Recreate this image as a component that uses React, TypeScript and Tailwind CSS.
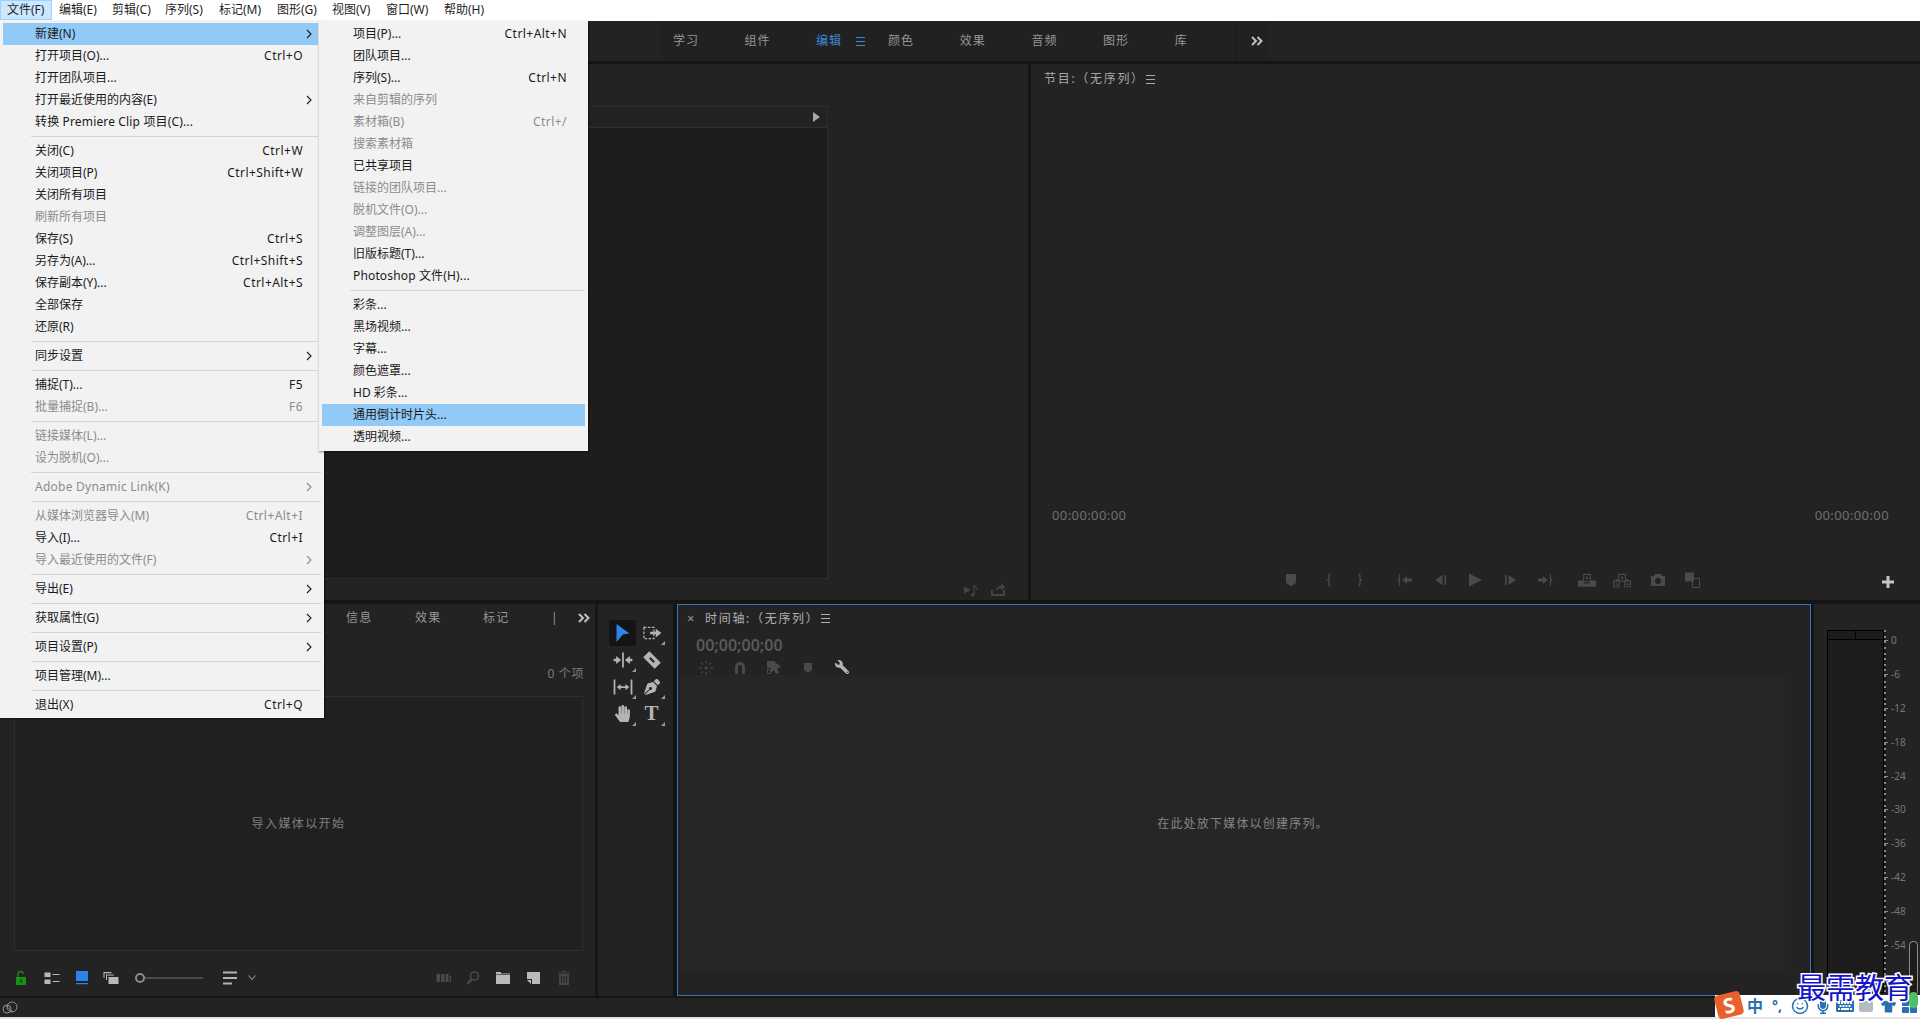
import React from "react";
import { FaWrench, FaHandPaper, FaPenNib, FaMicrophone, FaKeyboard, FaTshirt, FaThLarge } from "react-icons/fa";
import { LuSmile } from "react-icons/lu";

type Row = { t: string; s?: string; d?: boolean; a?: boolean; h?: boolean; l?: string } | "sep";

const fileMenu: Row[] = [
  { t: "新建(N)", a: true, h: true },
  { t: "打开项目(O)...", s: "Ctrl+O" },
  { t: "打开团队项目..." },
  { t: "打开最近使用的内容(E)", a: true },
  { t: "转换 Premiere Clip 项目(C)...", l: "tracking-[0.15px]" },
  "sep",
  { t: "关闭(C)", s: "Ctrl+W" },
  { t: "关闭项目(P)", s: "Ctrl+Shift+W" },
  { t: "关闭所有项目" },
  { t: "刷新所有项目", d: true },
  { t: "保存(S)", s: "Ctrl+S" },
  { t: "另存为(A)...", s: "Ctrl+Shift+S" },
  { t: "保存副本(Y)...", s: "Ctrl+Alt+S" },
  { t: "全部保存" },
  { t: "还原(R)" },
  "sep",
  { t: "同步设置", a: true },
  "sep",
  { t: "捕捉(T)...", s: "F5" },
  { t: "批量捕捉(B)...", s: "F6", d: true },
  "sep",
  { t: "链接媒体(L)...", d: true },
  { t: "设为脱机(O)...", d: true },
  "sep",
  { t: "Adobe Dynamic Link(K)", a: true, d: true, l: "tracking-[0.25px]" },
  "sep",
  { t: "从媒体浏览器导入(M)", s: "Ctrl+Alt+I", d: true },
  { t: "导入(I)...", s: "Ctrl+I" },
  { t: "导入最近使用的文件(F)", a: true, d: true },
  "sep",
  { t: "导出(E)", a: true },
  "sep",
  { t: "获取属性(G)", a: true },
  "sep",
  { t: "项目设置(P)", a: true },
  "sep",
  { t: "项目管理(M)..." },
  "sep",
  { t: "退出(X)", s: "Ctrl+Q" },
];

const newMenu: Row[] = [
  { t: "项目(P)...", s: "Ctrl+Alt+N" },
  { t: "团队项目..." },
  { t: "序列(S)...", s: "Ctrl+N" },
  { t: "来自剪辑的序列", d: true },
  { t: "素材箱(B)", s: "Ctrl+/", d: true },
  { t: "搜索素材箱", d: true },
  { t: "已共享项目" },
  { t: "链接的团队项目...", d: true },
  { t: "脱机文件(O)...", d: true },
  { t: "调整图层(A)...", d: true },
  { t: "旧版标题(T)..." },
  { t: "Photoshop 文件(H)...", l: "tracking-[0.15px]" },
  "sep",
  { t: "彩条..." },
  { t: "黑场视频..." },
  { t: "字幕..." },
  { t: "颜色遮罩..." },
  { t: "HD 彩条..." },
  { t: "通用倒计时片头...", h: true },
  { t: "透明视频..." },
];

function MenuRows({ rows, pad }: { rows: Row[]; pad: string }) {
  return (
    <>
      {rows.map((r, i) =>
        r === "sep" ? (
          <div key={i} className="h-[7px] flex items-center mx-[3px] pl-[28px]">
            <div className="h-px w-full bg-[#d4d4d4]" />
          </div>
        ) : (
          <div
            key={i}
            className={`h-[22px] mx-[3px] flex items-center whitespace-nowrap ${pad} ${r.h ? "bg-[#91c9f7]" : ""} ${r.d ? "text-[#8c8c8c]" : "text-[#1a1a1a]"}`}
          >
            <span className={r.l}>{r.t}</span>
            {r.s && <span className="ml-auto tracking-[0.45px]">{r.s}</span>}
            <span className={`${r.s ? "" : "ml-auto"} w-[12px] mr-[6px] flex justify-center`}>
              {r.a && (
                <svg width="6" height="10" viewBox="0 0 6 10" fill="none" stroke="currentColor" strokeWidth="1.1">
                  <path d="M1 1l4 4-4 4" />
                </svg>
              )}
            </span>
          </div>
        )
      )}
    </>
  );
}

const menuBar: [string, string][] = [
  ["文件(F)", "w-[52px] bg-[#cce8ff] border border-[#99d1ff] pl-[6px]"],
  ["编辑(E)", "w-[53px] pl-[7px]"],
  ["剪辑(C)", "w-[53px] pl-[7px]"],
  ["序列(S)", "w-[54px] pl-[7px]"],
  ["标记(M)", "w-[58px] pl-[7px]"],
  ["图形(G)", "w-[55px] pl-[7px]"],
  ["视图(V)", "w-[54px] pl-[7px]"],
  ["窗口(W)", "w-[58px] pl-[7px]"],
  ["帮助(H)", "w-[54px] pl-[7px]"],
];

type P = { className?: string };
const S = ({ children, className = "", size = 16 }: { children: React.ReactNode; className?: string; size?: number }) => (
  <svg width={size} height={size} viewBox="0 0 16 16" fill="currentColor" className={`shrink-0 ${className}`}>
    {children}
  </svg>
);

const Burger = ({ className = "" }: P) => (
  <svg width="9" height="9" viewBox="0 0 9 9" className={className} fill="currentColor">
    <rect y="0" width="9" height="1" />
    <rect y="4" width="9" height="1" />
    <rect y="8" width="9" height="1" />
  </svg>
);
const More = ({ className = "" }: P) => (
  <svg width="12" height="10" viewBox="0 0 12 10" className={className} fill="none" stroke="currentColor" strokeWidth="2">
    <path d="M1 1l4 4-4 4M6.5 1l4 4-4 4" />
  </svg>
);

const transport: [React.ReactNode, string][] = [
  [<S key="a"><path d="M3 2h10v9l-5 3-5-3z" /></S>, ""],
  [<S key="b"><path d="M9.5 2C8 2 8 3 8 4.5V7L6.5 8 8 9v2.5C8 13 8 14 9.5 14" fill="none" stroke="currentColor" strokeWidth="1.3" /></S>, "ml-[22px]"],
  [<S key="c"><path d="M6.5 2C8 2 8 3 8 4.5V7L9.5 8 8 9v2.5C8 13 8 14 6.5 14" fill="none" stroke="currentColor" strokeWidth="1.3" /></S>, "ml-[15px]"],
  [<S key="d"><path d="M3.5 2C2.5 2 2.5 3 2.5 4.5V7L1.3 8 2.5 9v2.5c0 1.500 0 2.500 1 2.500" fill="none" stroke="currentColor" strokeWidth="1.2" /><path d="M15 6.500H10V4L5.500 8 10 12V9.500h5z" /></S>, "ml-[29px]"],
  [<S key="e"><path d="M10.500 3v10L3 8z" /><rect x="12.500" y="3" width="1.600" height="10" /></S>, "ml-[19px]"],
  [<S key="f"><path d="M2 1.500L15 8 2 14.500z" /></S>, "ml-[19px]"],
  [<S key="g"><path d="M5.500 3v10L13 8z" /><rect x="2" y="3" width="1.600" height="10" /></S>, "ml-[20px]"],
  [<S key="h"><path d="M12.500 2c1 0 1 1 1 2.500V7l1.200 1-1.200 1v2.500c0 1.500 0 2.500-1 2.500" fill="none" stroke="currentColor" strokeWidth="1.2" /><path d="M1 6.500h5V4l4.500 4L6 12V9.500H1z" /></S>, "ml-[18px]"],
  [<S key="i" size={18}><path d="M0 8.500h5.500V14H0zM10.500 8.500H16V14h-5.500zM5.500 11h5v3h-5z" /><path d="M5 3h6v6.500H5z" fill="none" stroke="currentColor" /><rect x="7" y="5" width="2" height="2" /></S>, "ml-[25px]"],
  [<S key="j" size={18}><path d="M.5 9h5v5h-5zM10.500 9h5v5h-5z" fill="none" stroke="currentColor" /><path d="M5 3h6v6H5z" fill="none" stroke="currentColor" /><path d="M3 9V7.500h2M11 7.500h2V9" fill="none" stroke="currentColor" /><rect x="7" y="5" width="2" height="2" /><rect x="2" y="11" width="2" height="1.500" /><rect x="12" y="11" width="2" height="1.500" /></S>, "ml-[17px]"],
  [<S key="k"><path d="M1 4h3l1-2h6l1 2h3v10H1zM8 6a3 3 0 100 6 3 3 0 000-6z" fillRule="evenodd" /></S>, "ml-[19px]"],
  [<S key="l"><rect x="1" y="0.500" width="9" height="9" /><path d="M8.500 6.500h7v9h-7z" fill="none" stroke="currentColor" /></S>, "ml-[18px]"],
];

const Corner = () => (
  <span className="absolute right-[1px] bottom-[1px] w-0 h-0 border-l-[4px] border-l-transparent border-b-[4px] border-b-[#9a9a9a]" />
);

const tools: [React.ReactNode, boolean][] = [
  [<svg key="1" width="15" height="20" viewBox="0 0 15 20" fill="#2b84e6"><path d="M1.500 1L14.500 10.500 8 11.500 1.500 19z" /></svg>, false],
  [<S key="2" size={20}><rect x="1.500" y="3.500" width="8" height="9" fill="none" stroke="currentColor" strokeDasharray="2 1.200" /><path d="M6.500 7h4.500V4.500L15.500 8 11 11.500V9H6.500z" /></S>, true],
  [<S key="3" size={20}><path d="M7.300 2h1.400v12H7.300z" /><path d="M6.500 8L2.500 4.800v2.200H0.500v2h2v2.200zM9.500 8l4-3.200v2.200h2v2h-2v2.200z" /></S>, true],
  [<S key="4" size={20}><g transform="rotate(45 8 8)"><path fillRule="evenodd" d="M1.500 4.500h13v7h-13zM5.500 7.200v1.600h5V7.200z" /></g></S>, false],
  [<S key="5" size={20}><rect x="0.500" y="2" width="1.400" height="12" /><rect x="14.100" y="2" width="1.400" height="12" /><path d="M3 8l3-2.500V7.300h4V5.500L13 8l-3 2.500V8.700H6v1.800z" /></S>, true],
  [<span key="6" className="text-[16px] flex"><FaPenNib /></span>, true],
  [<span key="7" className="text-[17px] flex"><FaHandPaper /></span>, true],
  [<span key="8" className="text-[21px] font-bold leading-none [font-family:'Liberation_Serif',serif]">T</span>, true],
];

const tlIcons: [React.ReactNode, string][] = [
  [<S key="a"><path d="M8 1v3M8 12v3M1 8h3M12 8h3M3 3l2 2M11 11l2 2M13 3l-2 2M3 13l2-2" fill="none" stroke="currentColor" strokeWidth="1.300" strokeDasharray="1.600 .6" /><circle cx="8" cy="8" r="1.500" /></S>, "text-[#4a4a4a]"],
  [<S key="b"><path d="M3 14V7a5 5 0 0110 0v7h-3V7a2 2 0 00-4 0v7z" /></S>, "text-[#4a4a4a] ml-[18px]"],
  [<S key="c"><path d="M1 1h8v1L15 7l-4 1.500L13 13l-3 1-2-4-3 3V8H1z" fillRule="evenodd" /><rect x="1.500" y="9.500" width="3" height="4" fill="none" stroke="currentColor" /></S>, "text-[#4a4a4a] ml-[18px]"],
  [<S key="d" size={16}><path d="M4 3h8v7l-4 3-4-3z" /></S>, "text-[#4a4a4a] ml-[18px]"],
  [<span key="e" className="flex w-[16px] justify-center text-[14px]"><FaWrench className="-scale-x-100" /></span>, "text-[#b5b5b5] ml-[18px]"],
];

const projLeft: [React.ReactNode, string][] = [
  [<S key="a"><path d="M3 7h10v8H3z" /><path d="M5 7V4a2.500 2.500 0 015 0" fill="none" stroke="currentColor" strokeWidth="1.300" /><rect x="7" y="9.500" width="2" height="3" fill="#0c4a0c" /></S>, "text-[#159215] ml-[13px]"],
  [<S key="b"><rect x="0.500" y="2.500" width="6" height="4.500" /><rect x="0.500" y="9.500" width="6" height="4.500" /><rect x="8.500" y="4" width="7" height="1" /><rect x="8.500" y="11" width="7" height="1" /></S>, "text-[#b9b9b9] ml-[15px]"],
  [<S key="c"><rect x="2" y="1" width="12" height="10" /><rect x="2" y="13" width="12" height="1.200" /></S>, "text-[#2b85e8] ml-[14px]"],
  [<S key="d"><path d="M0.500 2h8v1.200h-7V8H0.500z" /><path d="M3 4.500h8v1h-7V10H3z" /><rect x="5.500" y="7" width="10" height="7" /></S>, "text-[#b9b9b9] ml-[13px]"],
];

const projRight: [React.ReactNode, string][] = [
  [<S key="a"><rect x="0.500" y="4" width="3.500" height="8" /><rect x="5" y="4" width="3.500" height="8" /><rect x="9.500" y="4" width="3" height="8" /><rect x="13.500" y="6" width="1.500" height="6" /></S>, "text-[#4a4a4a]"],
  [<S key="b"><circle cx="9.500" cy="6" r="4" fill="none" stroke="currentColor" strokeWidth="1.600" /><path d="M6.500 9L2.500 14" stroke="currentColor" strokeWidth="2.200" /></S>, "text-[#4a4a4a] ml-[13px]"],
  [<S key="c"><path d="M1 2h5v1.500h9V14H1z" /><rect x="1" y="4" width="14" height="0.600" fill="#232323" /></S>, "text-[#b9b9b9] ml-[14px]"],
  [<S key="d"><path d="M1 9V2h13v12H6V9z" /><path d="M1 10h4v4z" /></S>, "text-[#b9b9b9] ml-[15px]"],
  [<S key="e"><path d="M3 4h10v11H3zM5 6v7h1V6zM7.500 6v7h1V6zM10 6v7h1V6z" fillRule="evenodd" /><path d="M2 2.500h12v1H2zM6 1h4v1H6z" /></S>, "text-[#454545] ml-[14px]"],
];

const dbLabels = ["0", "-6", "-12", "-18", "-24", "-30", "-36", "-42", "-48", "-54"];

export default function App() {
  return (
    <div className="relative w-[1920px] h-[1019px] overflow-hidden bg-[#151515] flex flex-col text-[12px] [font-family:'Noto_Sans','Noto_Sans_CJK_SC',sans-serif]">
      {/* menu bar */}
      <div className="h-[21px] shrink-0 bg-white flex text-[#1f1f1f]">
        {menuBar.map(([t, c]) => (
          <div key={t} className={`h-[20px] flex items-center whitespace-nowrap ${c}`}>
            {t}
          </div>
        ))}
      </div>

      {/* workspaces */}
      <div className="h-[40px] shrink-0 bg-[#232323] pl-[661px] flex text-[#969696] tracking-[1px]">
        <div className="w-[608px] bg-[#212121] pl-[12px] flex items-center">
          {["学习", "组件"].map((t) => (
            <div key={t} className="w-[71.500px]">{t}</div>
          ))}
          <div className="w-[72px] flex items-center gap-[14px] text-[#3f87d6]">
            <span>编辑</span>
            <Burger />
          </div>
          {["颜色", "效果", "音频", "图形"].map((t) => (
            <div key={t} className="w-[71.700px]">{t}</div>
          ))}
          <div className="w-[60px]">库</div>
          <div className="h-full border-l border-[#1a1a1a] pl-[15px] flex items-center text-[#c0c0c0]">
            <More />
          </div>
        </div>
      </div>

      {/* top panels */}
      <div className="mt-[3px] h-[536px] shrink-0 flex gap-[3px]">
        <div className="w-[1028px] bg-[#232323] pt-[42px] flex flex-col">
          <div className="ml-[14px] w-[814px] flex-1 border border-[#2e2e2e] flex flex-col">
            <div className="h-[21px] border-b border-[#303030] flex items-center justify-end pr-[7px] text-[#a8a8a8]">
              <svg width="7" height="10" viewBox="0 0 7 10" fill="currentColor"><path d="M0 0l7 5-7 5z" /></svg>
            </div>
            <div className="flex-1 bg-[#1d1d1d]" />
          </div>
          <div className="h-[21px] pl-[963px] flex items-center text-[#444444]">
            <S><path d="M1 4.500L8 8 1 11.500z" /><path d="M11 13V3c1 2 3 2 3 5" fill="none" stroke="currentColor" strokeWidth="1.200" /><circle cx="9.500" cy="13" r="1.700" /></S>
            <S className="ml-[11px]"><path d="M1 8v6h14V8h-2v4H3V8z" /><path d="M6 9c0-3 2-5 5-5V1.500L15 5l-4 3.500V6c-2 0-3 1-5 3z" /></S>
          </div>
        </div>
        <div className="flex-1 bg-[#232323] flex flex-col">
          <div className="h-[30px] pl-[13px] flex items-center gap-[1px] text-[#a8a8a8] tracking-[1.700px]">
            <span>节目:（无序列）</span>
            <Burger />
          </div>
          <div className="flex-1" />
          <div className="h-[20px] flex items-center justify-between pl-[21px] pr-[31px] text-[#707070] text-[13px] tracking-[0.400px]">
            <span>00:00:00:00</span>
            <span>00:00:00:00</span>
          </div>
          <div className="mt-[44px] mb-[10px] h-[20px] pl-[252px] pr-[26px] flex items-center text-[#4a4a4a]">
            {transport.map(([ic, c], i) => (
              <span key={i} className={`flex ${c}`}>{ic}</span>
            ))}
            <svg width="12" height="12" viewBox="0 0 12 12" fill="#c4c4c4" className="ml-auto mt-[3px]">
              <path d="M4.500 0h3v4.500H12v3H7.500V12h-3V7.500H0v-3h4.500z" />
            </svg>
          </div>
        </div>
      </div>

      {/* bottom panels */}
      <div className="mt-[4px] h-[392px] shrink-0 flex">
        {/* project */}
        <div className="w-[595px] bg-[#232323] flex flex-col">
          <div className="h-[28px] pl-[346px] flex items-center text-[#969696] tracking-[1.300px]">
            <span className="w-[69px]">信息</span>
            <span className="w-[68px]">效果</span>
            <span className="w-[68px]">标记</span>
            <span className="w-[27px]">|</span>
            <More className="text-[#c0c0c0]" />
          </div>
          <div className="h-[64px] flex items-center justify-end pr-[11px] pt-[19px] text-[#7c7c7c] tracking-[0.600px]">0 个项</div>
          <div className="ml-[14px] w-[569px] h-[255px] border border-[#2e2e2e] bg-[#202020] flex items-center justify-center text-[#7f7f7f] tracking-[1.400px]">
            导入媒体以开始
          </div>
          <div className="flex-1 flex items-center pt-[8px]">
            {projLeft.map(([ic, c], i) => (
              <span key={i} className={`flex ${c}`}>{ic}</span>
            ))}
            <div className="ml-[16px] w-[10px] h-[10px] rounded-full border-2 border-[#8c8c8c]" />
            <div className="w-[58px] h-[2px] bg-[#4a4a4a]" />
            <S className="ml-[19px] text-[#b4b4b4]"><rect x="1" y="1.500" width="14" height="2" /><rect x="1" y="7" width="14" height="2" /><rect x="1" y="12.500" width="9" height="2" /></S>
            <svg width="10" height="7" viewBox="0 0 10 7" fill="none" stroke="#8f8f8f" strokeWidth="1.100" className="ml-[9px]"><path d="M1.500 1.500L5 5.500l3.500-4" /></svg>
            <div className="ml-auto flex items-center pr-[23px]">
              {projRight.map(([ic, c], i) => (
                <span key={i} className={`flex ${c}`}>{ic}</span>
              ))}
            </div>
          </div>
        </div>

        {/* tools */}
        <div className="ml-[3px] w-[75px] bg-[#232323] pt-[15px] pl-[10px]">
          <div className="grid grid-cols-[29px_29px] auto-rows-[27px] text-[#b4b4b4]">
            {tools.map(([ic, corner], i) => (
              <div key={i} className="relative flex items-center justify-center">
                {i === 0 && <div className="flex w-[27px] h-[26px] items-center justify-center rounded-[3px] bg-[#141414]">{ic}</div>}
                {i !== 0 && ic}
                {corner && <Corner />}
              </div>
            ))}
          </div>
        </div>

        {/* timeline */}
        <div className="ml-[4px] w-[1134px] bg-[#232323] border border-[#3078bf] flex flex-col">
          <div className="h-[27px] pl-[9px] shrink-0 flex items-center text-[#b0b0b0] tracking-[1.700px]">
            <span className="w-[18px] text-[13px] text-[#9a9a9a]">×</span>
            <span>时间轴:（无序列）</span>
            <Burger className="ml-[1px]" />
          </div>
          <div className="pl-[18px] h-[26px] shrink-0 flex items-center text-[16px] font-semibold text-[#595959]">00;00;00;00</div>
          <div className="pl-[20px] pt-[2px] h-[17px] shrink-0 flex items-start">
            {tlIcons.map(([ic, c], i) => (
              <span key={i} className={`flex ${c}`}>{ic}</span>
            ))}
          </div>
          <div className="ml-[3px] mr-[25px] mb-[22px] flex-1 bg-[#262626] flex items-center justify-center pl-[20px] text-[#858585] tracking-[1.200px]">
            在此处放下媒体以创建序列。
          </div>
        </div>

        {/* audio */}
        <div className="ml-[3px] flex-1 bg-[#232323] pt-[26px] pb-[3px] pl-[13px] flex">
          <div className="w-[57px] border border-black flex flex-col bg-[#1c1c1c]">
            <div className="h-[9px] border-b border-black flex justify-center">
              <div className="w-px bg-black" />
            </div>
          </div>
          <div className="w-[2px] bg-[repeating-linear-gradient(to_bottom,#8a8a8a_0,#8a8a8a_2px,#1a1a1a_2px,#1a1a1a_5.630px)]" />
          <div className="-ml-[2px] -mt-[6px] flex flex-col text-[10px] text-[#777777]">
            {dbLabels.map((d) => (
              <div key={d} className="h-[33.800px] flex items-center">
                <span className="w-[4px] h-px mr-[3px] bg-[#8a8a8a]" />
                {d}
              </div>
            ))}
          </div>
          <div className="ml-auto mr-[2px] w-[9px] h-[52px] self-end rounded-t-full border border-b-0 border-[#8a8a8a] bg-[#1c1c1c]" />
        </div>
      </div>

      {/* status bar */}
      <div className="mt-[2px] h-[19px] shrink-0 bg-[#232323] flex items-center pl-[2px]">
        <svg width="16" height="14" viewBox="0 0 16 14" fill="none" stroke="#8f8f8f" strokeWidth="1">
          <circle cx="5" cy="8" r="4" />
          <circle cx="10" cy="6" r="5" />
          <path d="M3 4l8 7" />
        </svg>
      </div>
      <div className="flex-1 bg-[#e4e4e4]" />

      {/* file menu */}
      <div className="absolute left-0 top-[21px] w-[324px] pt-[2px] pb-[2px] bg-[#f2f2f2] shadow-[1px_1px_2px_rgba(0,0,0,0.45)]">
        <MenuRows rows={fileMenu} pad="pl-[32px]" />
      </div>
      {/* new submenu */}
      <div className="absolute left-[318px] top-[21px] w-[270px] pt-[2px] pb-[3px] bg-[#f2f2f2] border-l border-[#e0e0e0] shadow-[1px_1px_2px_rgba(0,0,0,0.45)]">
        <MenuRows rows={newMenu} pad="pl-[31px]" />
      </div>

      {/* IME bar */}
      <div className="absolute left-[1715px] top-[995px] w-[205px] h-[22px] bg-white flex items-center pl-[32px] text-[#2a6fb0]">
        <span className="text-[16px] font-bold leading-none">中</span>
        <span className="ml-[9px] text-[14px] font-bold leading-none">°,</span>
        <LuSmile className="ml-[9px] text-[18px]" />
        <FaMicrophone className="ml-[6px] text-[16px]" />
        <FaKeyboard className="ml-[5px] text-[18px]" />
        <span className="ml-[5px] w-[14px] h-[11px] rounded-[2px] bg-[#b5bcc4]" />
        <FaTshirt className="ml-[8px] text-[15px]" />
        <FaThLarge className="ml-[6px] text-[15px]" />
      </div>
      <div className="absolute left-[1716px] top-[993px] w-[26px] h-[24px] rounded-[4px] -rotate-[14deg] bg-[#e8602c] flex items-center justify-center text-white text-[21px] font-bold leading-none">
        S
      </div>
      {/* meter level */}
      <div className="absolute left-[1909px] top-[992px] w-[9px] h-[16px] rounded-full bg-[#4fc06a]" />
      {/* watermark */}
      <div className="absolute left-[1797px] top-[966px] whitespace-nowrap text-[29px] font-normal leading-[40px] text-[#1212cc] [-webkit-text-stroke:3px_white] [paint-order:stroke_fill] [font-family:'Noto_Sans_CJK_SC',sans-serif]">
        最需教育
      </div>
    </div>
  );
}
